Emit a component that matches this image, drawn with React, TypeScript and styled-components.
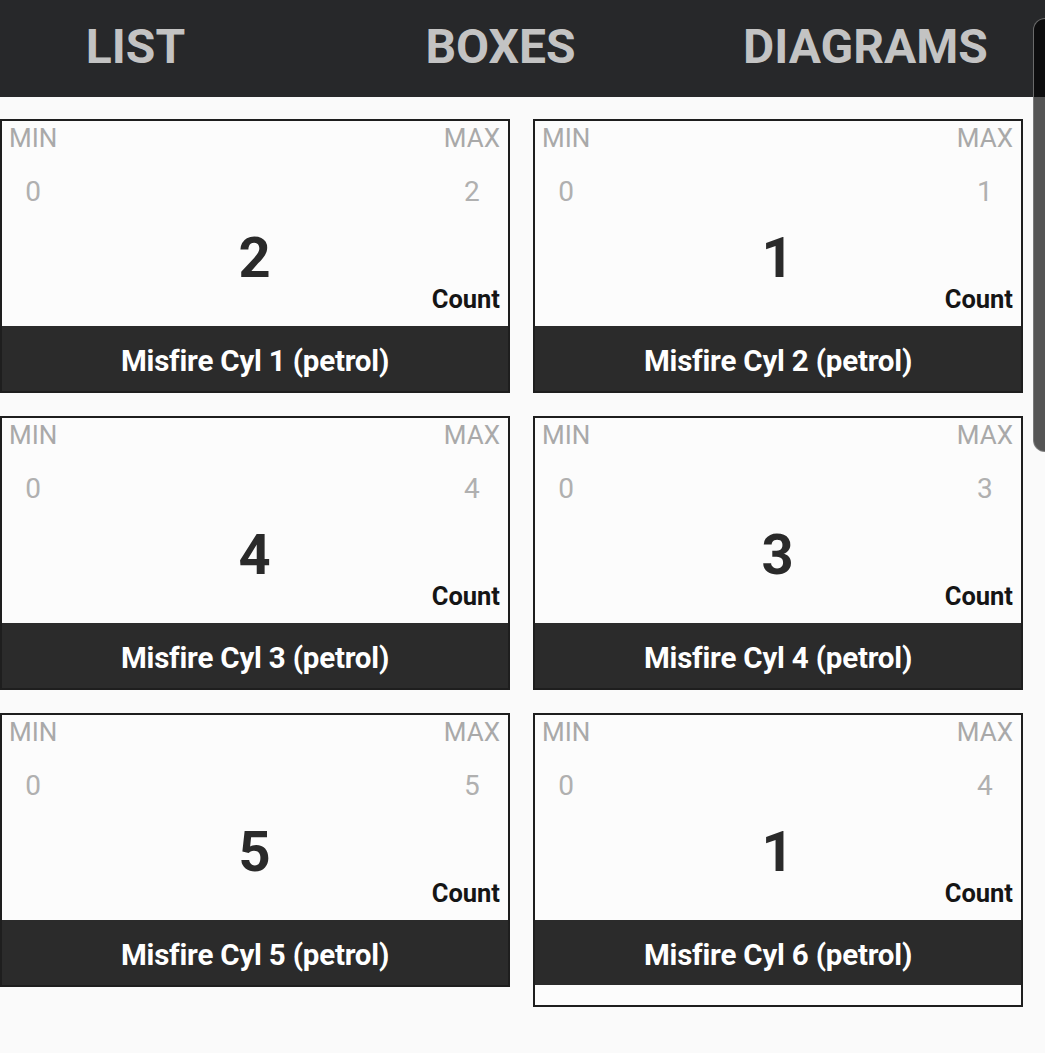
import { createGlobalStyle, styled } from "styled-components";

type Reading = {
  cylinder: number;
  min: number;
  max: number;
  value: number;
};

const readings: Reading[] = [
  { cylinder: 1, min: 0, max: 2, value: 2 },
  { cylinder: 2, min: 0, max: 1, value: 1 },
  { cylinder: 3, min: 0, max: 4, value: 4 },
  { cylinder: 4, min: 0, max: 3, value: 3 },
  { cylinder: 5, min: 0, max: 5, value: 5 },
  { cylinder: 6, min: 0, max: 4, value: 1 },
];

const tabs = ["LIST", "BOXES", "DIAGRAMS"];

const GaugeBox = ({ reading, tail }: { reading: Reading; tail?: boolean }) => {
  return (
    <Card $tail={tail}>
      <Body>
        <LimitRow>
          <Limit>
            <LimitLabel>MIN</LimitLabel>
            <LimitValue>{reading.min}</LimitValue>
          </Limit>
          <Limit>
            <LimitLabel>MAX</LimitLabel>
            <LimitValue>{reading.max}</LimitValue>
          </Limit>
        </LimitRow>
        <BigValue>{reading.value}</BigValue>
        <Unit>Count</Unit>
      </Body>
      <Title>Misfire Cyl {reading.cylinder} (petrol)</Title>
    </Card>
  );
};

const App = () => {
  return (
    <>
      <GlobalStyle />
      <Header>
        <TabRow>
          {tabs.map((tab) => (
            <Tab key={tab}>{tab}</Tab>
          ))}
        </TabRow>
      </Header>
      <Grid>
        {readings.map((r, i) => (
          <GaugeBox key={r.cylinder} reading={r} tail={i === readings.length - 1} />
        ))}
      </Grid>
      <ScrollThumb />
    </>
  );
};

const GlobalStyle = createGlobalStyle`
  html, body {
    margin: 0;
    padding: 0;
    background: #fafafa;
    overflow: hidden;
    font-family: Roboto, "Liberation Sans", sans-serif;
  }
`;

const Header = styled.header`
  height: 97px;
  background: #27282a;
  overflow: hidden;
`;

const TabRow = styled.nav`
  display: grid;
  grid-template-columns: repeat(3, 365px);
  margin-left: -47px;
`;

const Tab = styled.div`
  height: 97px;
  box-sizing: border-box;
  padding-bottom: 4px;
  line-height: 93px;
  text-align: center;
  font-size: 48px;
  font-weight: 700;
  color: #c3c3c3;
`;

const Grid = styled.main`
  display: grid;
  grid-template-columns: 510px 490px;
  column-gap: 23px;
  row-gap: 23px;
  align-items: start;
  padding-top: 22px;
`;

const Card = styled.section<{ $tail?: boolean }>`
  display: flex;
  flex-direction: column;
  border: 2px solid #1e1e1e;
  background: #fcfcfc;
  padding-bottom: ${(p) => (p.$tail ? "20px" : "0")};
`;

const Body = styled.div`
  height: 205px;
  box-sizing: border-box;
  display: flex;
  flex-direction: column;
  padding: 2px 8px 0 7px;
`;

const LimitRow = styled.div`
  display: flex;
  justify-content: space-between;
`;

const Limit = styled.div`
  display: flex;
  flex-direction: column;
  align-items: center;
`;

const LimitLabel = styled.span`
  font-size: 26px;
  line-height: 31px;
  color: #a9a9a9;
`;

const LimitValue = styled.span`
  margin-top: 21px;
  font-size: 28px;
  line-height: 34px;
  color: #b0b0b0;
`;

const BigValue = styled.div`
  margin-top: 25px;
  font-size: 56px;
  line-height: 48px;
  font-weight: 700;
  text-align: center;
  color: #2a2a2a;
`;

const Unit = styled.div`
  margin-top: 2px;
  font-size: 25.5px;
  line-height: 30px;
  font-weight: 700;
  text-align: right;
  color: #151515;
`;

const Title = styled.div`
  height: 65px;
  box-sizing: border-box;
  padding-top: 5px;
  line-height: 60px;
  background: #2b2b2b;
  color: #ffffff;
  text-align: center;
  font-size: 29.5px;
  font-weight: 700;
  letter-spacing: -0.2px;
`;

const ScrollThumb = styled.div`
  position: fixed;
  top: 18px;
  right: 0;
  width: 11px;
  height: 432px;
  background: rgba(0, 0, 0, 0.66);
  border: 1px solid rgba(130, 130, 130, 0.8);
  border-right: none;
  border-radius: 12px 0 0 12px;
`;

export default App;
